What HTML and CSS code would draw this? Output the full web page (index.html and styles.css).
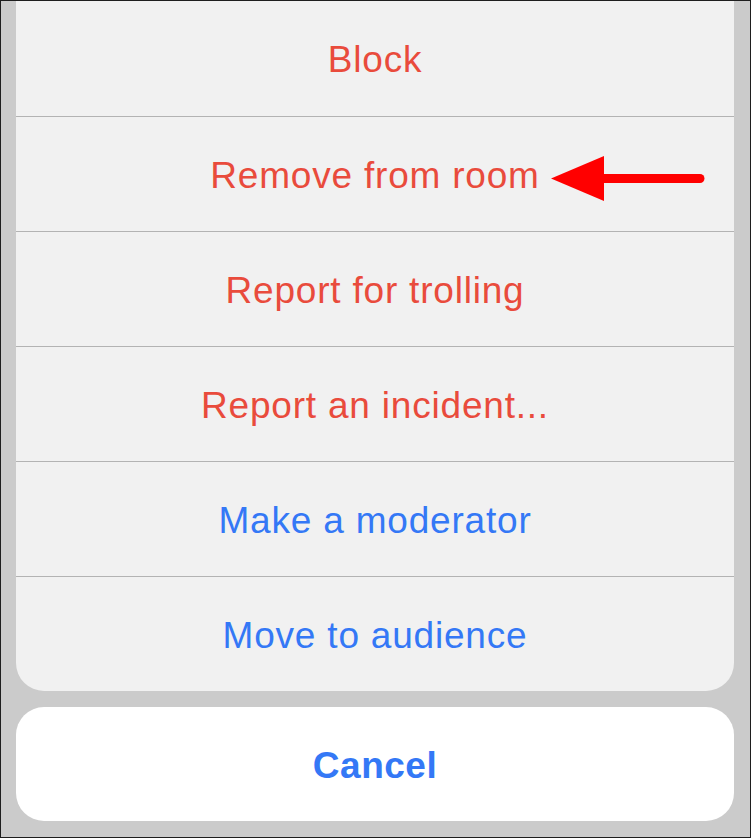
FILE: index.html
```html
<!DOCTYPE html>
<html>
<head>
<meta charset="utf-8">
<link rel="stylesheet" href="styles.css">
</head>
<body>
<div class="frame">
  <div class="sheet">
    <div class="row row-first red">Block</div>
    <div class="row red">Remove from room
      <svg class="arrow" width="160" height="50" viewBox="0 0 160 50">
        <line x1="50" y1="23.5" x2="151" y2="23.5" stroke="#ff0000" stroke-width="9" stroke-linecap="round"/>
        <polygon points="2,23.5 55,1 55,46" fill="#ff0000"/>
      </svg>
    </div>
    <div class="row red">Report for trolling</div>
    <div class="row red">Report an incident...</div>
    <div class="row blue">Make a moderator</div>
    <div class="row row-last blue">Move to audience</div>
  </div>
  <div class="cancel">Cancel</div>
</div>
</body>
</html>
```
FILE: styles.css
```css
html, body {
  margin: 0;
  padding: 0;
}
body {
  font-family: "Liberation Sans", Arial, sans-serif;
}
.frame {
  width: 751px;
  height: 838px;
  box-sizing: border-box;
  border: 1px solid #1e1e1e;
  background: #cbcbcb;
  padding: 0 16px 0 15px;
  display: flex;
  flex-direction: column;
  gap: 16px;
}
.sheet {
  background: #f1f1f1;
  border-radius: 0 0 28px 28px;
  display: flex;
  flex-direction: column;
  overflow: hidden;
}
.row {
  position: relative;
  box-sizing: border-box;
  height: 115px;
  padding-top: 3px;
  border-bottom: 1px solid #b3b3b3;
  display: flex;
  align-items: center;
  justify-content: center;
  font-size: 37px;
  letter-spacing: 0.8px;
}
.row-first {
  height: 116px;
}
.row-last {
  height: 114px;
  border-bottom: none;
}
.red {
  color: #e94b3c;
}
.blue {
  color: #3478f6;
}
.arrow {
  position: absolute;
  left: 533px;
  top: 38px;
}
.cancel {
  box-sizing: border-box;
  height: 114px;
  padding-top: 3px;
  background: #ffffff;
  border-radius: 28px;
  display: flex;
  align-items: center;
  justify-content: center;
  font-size: 37px;
  font-weight: bold;
  letter-spacing: 0.5px;
  color: #3478f6;
}
```
